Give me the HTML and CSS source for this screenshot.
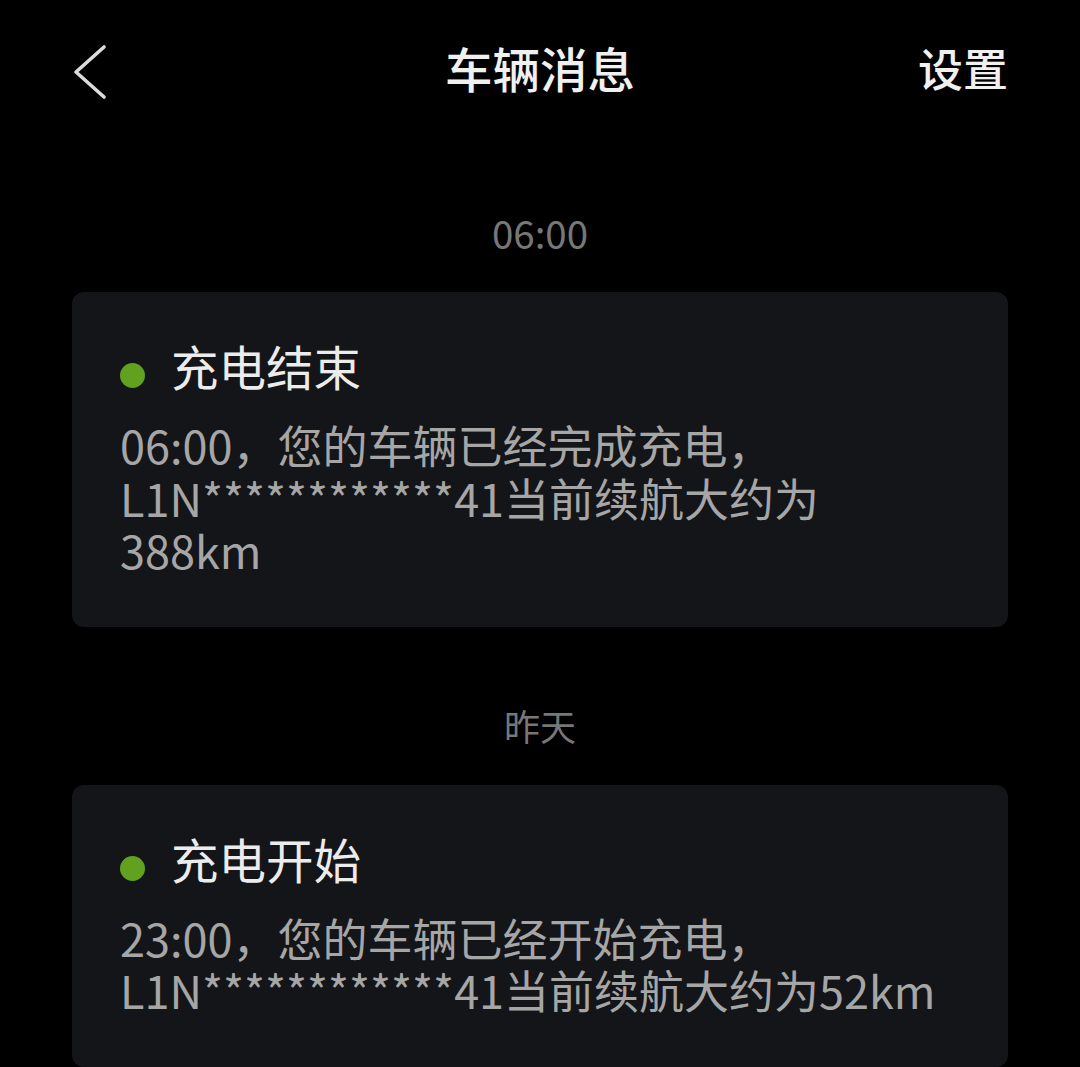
FILE: index.html
```html
<!DOCTYPE html>
<html lang="zh-CN">
<head>
<meta charset="utf-8">
<title>车辆消息</title>
<link rel="stylesheet" href="styles.css">
</head>
<body>
<div class="page">
  <header class="topbar">
    <div class="back">
      <svg width="36" height="56" viewBox="0 0 36 56"><polyline points="32,3 4,28 32,53" fill="none" stroke="#dcdcdc" stroke-width="3.6" stroke-linecap="round" stroke-linejoin="round"/></svg>
    </div>
    <div class="title">车辆消息</div>
    <div class="settings">设置</div>
  </header>

  <div class="stamp stamp-time">06:00</div>
  <section class="card">
    <div class="card-head"><span class="dot"></span><span class="card-title">充电结束</span></div>
    <p class="card-body">06:00，您的车辆已经完成充电，<br>L1N************41当前续航大约为<br>388km</p>
  </section>

  <div class="stamp">昨天</div>
  <section class="card">
    <div class="card-head"><span class="dot"></span><span class="card-title">充电开始</span></div>
    <p class="card-body">23:00，您的车辆已经开始充电，<br>L1N************41当前续航大约为52km</p>
  </section>
</div>
</body>
</html>
```

FILE: styles.css
```css
html, body {
  margin: 0;
  padding: 0;
  background: #000;
}
body {
  font-family: "Noto Sans CJK SC", "Noto Sans", sans-serif;
  color: #eee;
}
.page {
  height: 1067px;
  overflow: hidden;
}
.topbar {
  box-sizing: border-box;
  height: 144px;
  padding: 0 72px 8px;
  display: grid;
  grid-template-columns: 1fr auto 1fr;
  align-items: center;
}
.back {
  display: flex;
  align-items: center;
  margin-top: 8px;
}
.back svg { display: block; }
.title {
  font-size: 47.5px;
  font-weight: 500;
  color: #f0f0f0;
  line-height: 56px;
}
.settings {
  justify-self: end;
  font-size: 45px;
  font-weight: 500;
  color: #f0f0f0;
  line-height: 56px;
}
.stamp {
  box-sizing: border-box;
  height: 50px;
  margin-top: 65px;
  padding-bottom: 4px;
  text-align: center;
  font-size: 36px;
  line-height: 46px;
  color: #777;
}
.stamp-time {
  font-size: 38.5px;
}
.card + .stamp {
  margin-top: 75px;
}
.card {
  margin: 33px 72px 0;
  background: #141519;
  border-radius: 12px;
  padding: 46px 48px 50px;
}
.card-head {
  display: flex;
  align-items: center;
  height: 56px;
}
.dot {
  width: 25px;
  height: 25px;
  border-radius: 50%;
  background: #62a11f;
  margin-right: 26px;
  margin-top: 19px;
  flex: none;
}
.card-title {
  font-size: 47.5px;
  line-height: 56px;
  color: #ececec;
}
.card-body {
  margin: 25px 0 0;
  font-size: 45px;
  line-height: 52.5px;
  color: #a6a6a6;
}
```
